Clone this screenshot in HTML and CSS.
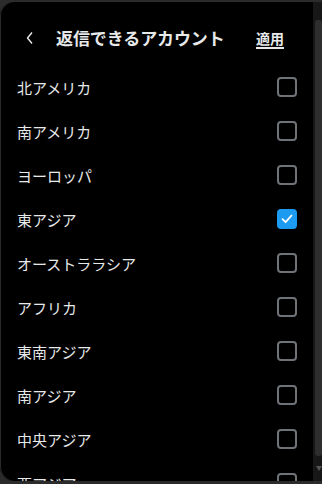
FILE: index.html
```html
<!DOCTYPE html>
<html lang="ja">
<head>
<meta charset="utf-8">
<link rel="stylesheet" href="styles.css">
</head>
<body>
<div class="frame">
  <div class="panel">
    <header class="head">
      <button class="back" aria-label="戻る">
        <svg width="10" height="14" viewBox="0 0 10 14"><path d="M7 1.5 L2.5 7 L7 12.5" fill="none" stroke="#e7e9ea" stroke-width="1.4"/></svg>
      </button>
      <h1 class="title">返信できるアカウント</h1>
      <a class="apply">適用</a>
    </header>
    <ul class="list">
      <li class="row"><span>北アメリカ</span><i class="box"></i></li>
      <li class="row"><span>南アメリカ</span><i class="box"></i></li>
      <li class="row"><span>ヨーロッパ</span><i class="box"></i></li>
      <li class="row"><span>東アジア</span><i class="box checked"><svg width="12" height="10" viewBox="0 0 12 10"><path d="M1.5 5.2 L4.6 8.2 L10.5 1.5" fill="none" stroke="#fff" stroke-width="1.8" stroke-linecap="round" stroke-linejoin="round"/></svg></i></li>
      <li class="row"><span>オーストララシア</span><i class="box"></i></li>
      <li class="row"><span>アフリカ</span><i class="box"></i></li>
      <li class="row"><span>東南アジア</span><i class="box"></i></li>
      <li class="row"><span>南アジア</span><i class="box"></i></li>
      <li class="row"><span>中央アジア</span><i class="box"></i></li>
      <li class="row"><span>西アジア</span><i class="box"></i></li>
    </ul>
  </div>
  <div class="scrollbar">
    <div class="thumb"></div>
    <div class="arrow"></div>
  </div>
</div>
</body>
</html>
```
FILE: styles.css
```css
html, body {
  margin: 0;
  padding: 0;
  background: #2b2b2b;
  height: 484px;
  overflow: hidden;
  font-family: "Noto Sans CJK JP", "Noto Sans", sans-serif;
}
.frame {
  display: flex;
  height: 479px;
  margin-top: 2px;
}
.panel {
  width: 313px;
  height: 479px;
  background: #000;
  border-radius: 14px 0 0 14px;
  box-shadow: inset 1px 0 0 #2a2a2a;
  overflow: hidden;
  color: #e7e9ea;
}
.head {
  display: flex;
  align-items: center;
  height: 63px;
  padding: 0 0 0 25px;
}
.back {
  background: none;
  border: 0;
  padding: 0;
  width: 10px;
  height: 14px;
  display: flex;
  margin-top: 8px;
}
.title {
  margin: 8px 0 0 21px;
  font-size: 17px;
  font-weight: 700;
  letter-spacing: -0.1px;
  flex: 1;
}
.apply {
  margin: 8px 29px 0 0;
  font-size: 14px;
  font-weight: 700;
  text-decoration: underline;
  text-decoration-thickness: 2px;
  text-underline-offset: 3px;
}
.list {
  list-style: none;
  margin: 0;
  padding: 0;
}
.row {
  display: flex;
  align-items: center;
  justify-content: space-between;
  height: 44px;
  padding: 0 16px 0 17px;
  font-size: 15px;
}
.box {
  width: 20px;
  height: 20px;
  box-sizing: border-box;
  border: 2px solid #6f7377;
  border-radius: 4px;
  display: flex;
  align-items: center;
  justify-content: center;
}
.box.checked {
  background: #1d9bf0;
  border-color: #1d9bf0;
}
.scrollbar {
  width: 9px;
  background: #171717;
  position: relative;
}
.thumb {
  position: absolute;
  left: 2px;
  right: 0;
  top: 18px;
  height: 436px;
  background: #2e2e2e;
  border-radius: 3px;
}
.arrow {
  position: absolute;
  left: 3px;
  top: 464px;
  width: 0;
  height: 0;
  border-left: 3px solid transparent;
  border-right: 3px solid transparent;
  border-top: 5px solid #555;
}
```
